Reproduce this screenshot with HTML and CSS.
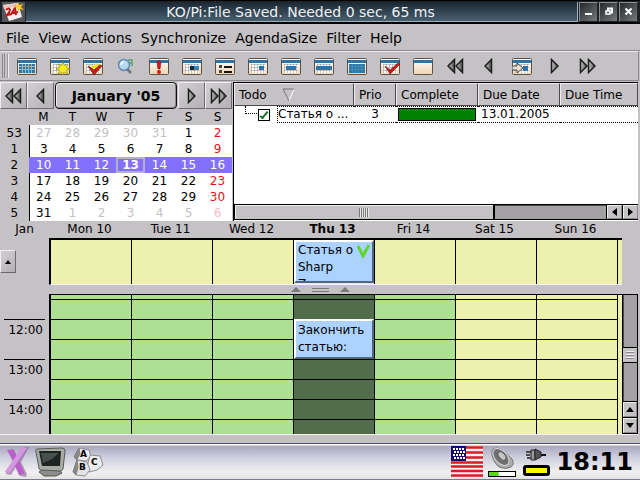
FILE: index.html
```
<!DOCTYPE html>
<html lang="en">
<head>
    <meta charset="UTF-8">
    <meta name="viewport" content="width=device-width, initial-scale=1.0">
    <title>KO/Pi</title>
    <link rel="stylesheet" href="styles.css">
</head>
<body>
    <!-- shared icon shapes -->
    <svg class="sprite" aria-hidden="true">
        <defs>
            <linearGradient id="paper" x1="0" y1="0" x2="0" y2="1">
                <stop offset="0" stop-color="#ffffff"/>
                <stop offset="1" stop-color="#f0d4b0"/>
            </linearGradient>
            <linearGradient id="steel" x1="0" y1="0" x2="1" y2="0">
                <stop offset="0" stop-color="#c8c8c8"/>
                <stop offset="1" stop-color="#505050"/>
            </linearGradient>
            <pattern id="cells" x="3" y="6" width="3" height="3" patternUnits="userSpaceOnUse">
                <path d="M0 0h3M0 0v3" stroke="#8c8a88" stroke-width="1"/>
            </pattern>
            <symbol id="blank" viewBox="0 0 20 17">
                <rect x="0.5" y="0.5" width="19" height="16" rx="1" fill="url(#paper)" stroke="#5c5248"/>
                <rect x="1" y="2" width="18" height="3" fill="#2a74a8"/>
            </symbol>
            <symbol id="cal" viewBox="0 0 20 17">
                <use href="#blank"/>
                <rect x="3" y="6" width="14" height="9" fill="#fff"/>
                <rect x="3" y="6" width="14" height="9" fill="url(#cells)"/>
            </symbol>
            <symbol id="left" viewBox="0 0 9 16">
                <path d="M7.5 1.5v13L1 8z" fill="url(#steel)" stroke="#1c1c1c" stroke-width="1.5"/>
            </symbol>
            <symbol id="right" viewBox="0 0 9 16">
                <path d="M1.5 1.5v13L8 8z" fill="url(#steel)" stroke="#1c1c1c" stroke-width="1.5"/>
            </symbol>
            <symbol id="left2" viewBox="0 0 17 16">
                <use href="#left" x="0" width="9" height="16"/>
                <use href="#left" x="8" width="9" height="16"/>
            </symbol>
            <symbol id="right2" viewBox="0 0 17 16">
                <use href="#right" x="0" width="9" height="16"/>
                <use href="#right" x="8" width="9" height="16"/>
            </symbol>
        </defs>
    </svg>

    <header class="titlebar">
        <svg class="app-icon" width="23" height="20" viewBox="0 0 23 20">
            <rect width="23" height="20" fill="#55585a"/>
            <path d="M1 3l15-2 4 14-13 4z" fill="#f4eeee"/>
            <path d="M1 3l15-2 1 3-15 3z" fill="#e8c8c0"/>
            <path d="M4 8q3-3 4 0q0 2-3 5l5-1M14 13l-1-7-3 5 6-1" fill="none" stroke="#c01818" stroke-width="2"/>
            <path d="M16 0l1 3 4-1-2 3 3 3-4-1-2 3-1-4-3-1 3-2z" fill="#ffc828"/>
        </svg>
        <h1 class="title">KO/Pi:File Saved. Needed 0 sec, 65 ms</h1>
        <button class="win-btn" aria-label="Minimize"><svg width="11" height="11"><path d="M2 7h7v2H2z" fill="#fff"/></svg></button>
        <button class="win-btn" aria-label="Restore"><svg width="11" height="11"><path d="M5 2.500h4v4H5z" fill="none" stroke="#fff" stroke-width="2"/><path d="M3 5h4v3H3z" fill="#555" stroke="#fff" stroke-width="1.500"/></svg></button>
        <button class="win-btn" aria-label="Close"><svg width="11" height="11"><path d="M2.500 2.500l6 6M8.500 2.500l-6 6" stroke="#fff" stroke-width="2"/></svg></button>
    </header>

    <nav class="menubar">
        <button>File</button>
        <button>View</button>
        <button>Actions</button>
        <button>Synchronize</button>
        <button>AgendaSize</button>
        <button>Filter</button>
        <button>Help</button>
    </nav>

    <div class="toolbar">
        <div class="grip"></div>
        <button aria-label="Configure"><svg width="20" height="17"><use href="#blank"/><path d="M2 6h16v9H2z" fill="#2e78a4"/><path d="M2 8.500h16M2 11.500h16M5.500 6v9M8.500 6v9M11.500 6v9M14.500 6v9" stroke="#9cb8b8"/></svg></button>
        <button aria-label="New event"><svg width="20" height="17"><use href="#cal"/><path d="M13 4l1.500 3.500L18 6l-1.500 3.500L20 11l-3.500 1L18 16l-4-2-1 3-1.500-3L8 16l1.500-4L6 11l3.500-1.500L8 6l3.500 1.500z" fill="#f8ec20" stroke="#8c8400" stroke-width=".6"/></svg></button>
        <button aria-label="New todo"><svg width="20" height="17"><use href="#cal"/><path d="M13 4l1 3 4-1-2 4-6 1-3-4 4 1z" fill="#f8e020"/><path d="M5 8l6 4 6-5 2 1-8 9z" fill="#d01c10" stroke="#701008" stroke-width=".7"/></svg></button>
        <button aria-label="Search"><svg width="20" height="17"><circle cx="8" cy="7" r="5.500" fill="#b4d8f0" stroke="#6088b0" stroke-width="1.500"/><path d="M5 7q0-3 3-3" stroke="#fff" stroke-width="1.500" fill="none"/><path d="M11 11l4 4" stroke="#70747c" stroke-width="2.500"/><path d="M12 2h4v6M16 5h-2" stroke="#58a070" stroke-width="1.500" fill="none"/></svg></button>
        <button aria-label="What's next"><svg width="20" height="17"><use href="#blank"/><path d="M8 4q2-3 4 0l-1 7H9z" fill="#d81818" stroke="#801010" stroke-width=".6"/><circle cx="10" cy="14" r="2" fill="#d81818"/></svg></button>
        <button aria-label="Day view"><svg width="20" height="17"><use href="#cal"/><path d="M8 8h4v4H8z" fill="#102838"/><path d="M12 8h5v4h-5z" fill="#3a84b4"/></svg></button>
        <button aria-label="List view"><svg width="20" height="17"><use href="#blank"/><path d="M4 7h3v3H4zM4 12h3v3H4z" fill="#444"/><path d="M9 8h8v2H9zM9 13h8v2H9z" fill="#111"/></svg></button>
        <button aria-label="One day"><svg width="20" height="17"><use href="#cal"/><path d="M11 8h5v4h-5z" fill="#2a74a8"/></svg></button>
        <button aria-label="Work week"><svg width="20" height="17"><use href="#cal"/><path d="M5 8h10v4H5z" fill="#2a74a8"/></svg></button>
        <button aria-label="Week"><svg width="20" height="17"><use href="#cal"/><path d="M2 8h16v4H2z" fill="#2a74a8"/></svg></button>
        <button aria-label="Month"><svg width="20" height="17"><use href="#cal"/><path d="M2 6h16v9H2z" fill="#2a78a8"/><path d="M2 8.500h16M2 11.500h16M5.500 6v9M8.500 6v9M11.500 6v9M14.500 6v9" stroke="#5494b4" stroke-width=".6"/></svg></button>
        <button aria-label="Todo view"><svg width="20" height="17"><use href="#cal"/><path d="M5 8l5 4 8-7 2 1-10 10z" fill="#d01418" stroke="#701010" stroke-width=".6"/></svg></button>
        <button aria-label="Journal"><svg width="20" height="17"><use href="#blank"/></svg></button>
        <button aria-label="Previous month"><svg width="17" height="16"><use href="#left2"/></svg></button>
        <button aria-label="Previous"><svg width="9" height="16"><use href="#left"/></svg></button>
        <button aria-label="Today"><svg width="20" height="17"><use href="#cal"/><path d="M11 8h5v5h-5z" fill="#2a74a8"/><path d="M0 8h5V5l6 5-6 5v-3H0z" fill="#e8e0d8" stroke="#444"/></svg></button>
        <button aria-label="Next"><svg width="9" height="16"><use href="#right"/></svg></button>
        <button aria-label="Next month"><svg width="17" height="16"><use href="#right2"/></svg></button>
    </div>

    <section class="top-pane">
        <div class="datenav">
            <div class="datenav-bar">
                <button class="raised" aria-label="Previous year"><svg width="17" height="16"><use href="#left2"/></svg></button>
                <button class="raised" aria-label="Previous month"><svg width="9" height="16"><use href="#left"/></svg></button>
                <button class="month">January '05</button>
                <button class="raised" aria-label="Next month"><svg width="9" height="16"><use href="#right"/></svg></button>
                <button class="raised" aria-label="Next year"><svg width="17" height="16"><use href="#right2"/></svg></button>
            </div>
            <table class="month-grid">
                <thead>
                    <tr><th></th><th>M</th><th>T</th><th>W</th><th>T</th><th>F</th><th>S</th><th>S</th></tr>
                </thead>
                <tbody>
                    <tr><th>53</th><td class="other">27</td><td class="other">28</td><td class="other">29</td><td class="other">30</td><td class="other">31</td><td>1</td><td class="holiday">2</td></tr>
                    <tr><th>1</th><td>3</td><td>4</td><td>5</td><td>6</td><td>7</td><td>8</td><td class="holiday">9</td></tr>
                    <tr class="selected"><th>2</th><td>10</td><td>11</td><td>12</td><td class="today">13</td><td>14</td><td>15</td><td>16</td></tr>
                    <tr><th>3</th><td>17</td><td>18</td><td>19</td><td>20</td><td>21</td><td>22</td><td class="holiday">23</td></tr>
                    <tr><th>4</th><td>24</td><td>25</td><td>26</td><td>27</td><td>28</td><td>29</td><td class="holiday">30</td></tr>
                    <tr><th>5</th><td>31</td><td class="other">1</td><td class="other">2</td><td class="other">3</td><td class="other">4</td><td class="other">5</td><td class="other holiday">6</td></tr>
                </tbody>
            </table>
        </div>

        <div class="todo">
            <table class="todo-list">
                <colgroup>
                    <col class="col-todo"><col class="col-prio"><col class="col-date"><col class="col-date"><col>
                </colgroup>
                <thead>
                    <tr>
                        <th>Todo <svg class="sort" width="13" height="14"><path d="M12 1L7 13" stroke="#fff"/><path d="M12 1H1l6 12" fill="none" stroke="#777"/></svg></th>
                        <th>Prio</th>
                        <th>Complete</th>
                        <th>Due Date</th>
                        <th>Due Time</th>
                    </tr>
                </thead>
                <tbody>
                    <tr>
                        <td class="todo-cell">
                            <div class="todo-item">
                                <span class="branch"></span>
                                <input type="checkbox" id="todo1" checked>
                                <label for="todo1">Статья о ...</label>
                            </div>
                        </td>
                        <td class="prio">3</td>
                        <td><div class="complete"></div></td>
                        <td>13.01.2005</td>
                        <td></td>
                    </tr>
                </tbody>
            </table>
            <div class="hscroll">
                <div class="hthumb"><span class="ridges"></span></div>
                <div class="htrack"></div>
                <button class="scroll-btn" aria-label="Scroll left"><svg width="5" height="8"><path d="M5 0v8L0 4z"/></svg></button>
                <button class="scroll-btn" aria-label="Scroll right"><svg width="5" height="8"><path d="M0 0v8l5-4z"/></svg></button>
            </div>
        </div>
    </section>

    <div class="day-names">
        <span class="month-name">Jan</span>
        <span>Mon 10</span>
        <span>Tue 11</span>
        <span>Wed 12</span>
        <span class="current">Thu 13</span>
        <span>Fri 14</span>
        <span>Sat 15</span>
        <span>Sun 16</span>
    </div>

    <section class="allday">
        <div class="gutter">
            <button class="raised expand" aria-label="Expand"><svg width="6" height="4"><path d="M3 0l3 4H0z"/></svg></button>
        </div>
        <div class="days">
            <div class="day"></div>
            <div class="day"></div>
            <div class="day"></div>
            <div class="day">
                <div class="event">
                    <svg class="tick" width="13" height="15"><path d="M1 3l5 10 6-11" fill="none" stroke="#5fd62c" stroke-width="3"/></svg>
                    Статья о Sharp Zaurus
                </div>
            </div>
            <div class="day"></div>
            <div class="day"></div>
            <div class="day"></div>
        </div>
    </section>

    <div class="splitter">
        <svg width="10" height="5"><path d="M5 0l5 5H0z"/></svg>
        <span class="handle"></span>
        <svg width="10" height="5"><path d="M5 0l5 5H0z"/></svg>
    </div>

    <section class="agenda">
        <div class="hours">
            <span>12:00</span>
            <span>13:00</span>
            <span>14:00</span>
        </div>
        <div class="days">
            <div class="day work"></div>
            <div class="day work"></div>
            <div class="day work"></div>
            <div class="day now">
                <div class="event">Закончить статью:</div>
            </div>
            <div class="day work"></div>
            <div class="day"></div>
            <div class="day"></div>
        </div>
        <div class="vscroll">
            <div class="vtrack before"></div>
            <div class="vthumb"></div>
            <div class="vtrack after"></div>
            <button class="scroll-btn" aria-label="Scroll up"><svg width="8" height="5"><path d="M4 0l4 5H0z"/></svg></button>
            <button class="scroll-btn" aria-label="Scroll down"><svg width="8" height="5"><path d="M0 0h8L4 5z"/></svg></button>
        </div>
    </section>

    <footer class="taskbar">
        <button class="task" aria-label="Start">
            <svg width="26" height="32" viewBox="0 0 26 32">
                <path d="M4 5l6-1 4 8 5-10 6-1-8 15 6 12-1 3-6-1-4-9-5 8-5-1 1-4 6-9z" fill="#70487c" opacity=".5"/>
                <path d="M3 4l6-1 4 8 5-10 5 1-8 13 6 13-6 1-4-9-5 7-5-1 8-11z" fill="#b860c8"/>
                <path d="M18 1l5 1-17 25-5-1z" fill="#d498e0"/>
            </svg>
        </button>
        <button class="task" aria-label="Desktop">
            <svg width="32" height="30" viewBox="0 0 32 30">
                <path d="M4 25l6-4 14 1 3 4-6 3H9z" fill="#8c8c88" stroke="#555"/>
                <path d="M2 2l25-1q3 0 3 3l-2 18q-1 2-3 2L6 23q-2 0-2-2L1 5q-1-3 1-3z" fill="#a8aaa4" stroke="#585a56"/>
                <path d="M4 4h22l-1 15H7z" fill="#1d2422"/>
                <path d="M6 6h18l-7 6-9 4z" fill="#46504c"/>
            </svg>
        </button>
        <button class="task" aria-label="Input method">
            <svg width="32" height="30" viewBox="0 0 32 30">
                <g stroke="#77777a" stroke-width=".8">
                    <path d="M2 10l5-9 10 2 2 7-5 4-9-1z" fill="#f0f0f0"/>
                    <path d="M15 20l3-12 10 1 3 9-6 5-8 2z" fill="#ececec"/>
                    <path d="M1 25l4-12 10 2 3 8-5 6-9-1z" fill="#e4e4e4"/>
                    <path d="M2 10l5-9 1 6-3 6zM1 25l4-12 1 7-2 8z" fill="#8a8a8a"/>
                </g>
                <g class="block-letters"><text x="8" y="10">A</text><text x="7" y="23">B</text><text x="19" y="18">C</text></g>
            </svg>
        </button>
        <div class="spacer"></div>
        <button class="task" aria-label="Keyboard layout: US">
            <svg width="32" height="31" viewBox="0 0 32 31">
                <rect width="32" height="31" fill="#f4f0f0"/>
                <path d="M0 1.500h32M0 6.500h32M0 11.500h32M0 16.500h32M0 20.500h32M0 25h32M0 29.500h32" stroke="#d81c28" stroke-width="2.500"/>
                <rect width="15" height="15" fill="#10106c"/>
                <path d="M2 3h12M3 6h12M2 9h12M3 12h12" stroke="#fff" stroke-width="2" stroke-dasharray="2 1"/>
            </svg>
        </button>
        <button class="task volume" aria-label="Volume">
            <svg width="26" height="22" viewBox="0 0 26 22">
                <path d="M3 3q4-4 10 0l10 9q3 5-1 8-5 3-12 0-8-7-7-17z" fill="#aaa" stroke="#777"/>
                <ellipse cx="12" cy="10" rx="10" ry="6" transform="rotate(48 12 10)" fill="#707070" stroke="#d8d8d8"/>
                <ellipse cx="13" cy="9" rx="5" ry="3" transform="rotate(48 13 9)" fill="#c4c4c4" stroke="#555"/>
            </svg>
            <span class="level"></span>
        </button>
        <button class="task power" aria-label="Power">
            <svg width="20" height="14" viewBox="0 0 20 14">
                <path d="M0 4h7M0 7h4M1 10h6" stroke="#222" stroke-width="1.500"/>
                <path d="M5 2h4v10H5z" fill="#999" stroke="#222"/>
                <path d="M9 1l6 3v5l-6 3z" fill="#555" stroke="#222"/>
                <path d="M15 7h5" stroke="#111" stroke-width="2"/>
            </svg>
            <span class="battery"></span>
        </button>
        <time class="clock">18:11</time>
    </footer>
</body>
</html>
```
FILE: styles.css
```
* {
    margin: 0;
    padding: 0;
    box-sizing: border-box;
}

body {
    display: flex;
    flex-direction: column;
    min-height: 100vh;
    background: #c5c2c5;
    color: #000;
    font-family: "DejaVu Sans", "Noto Sans", sans-serif;
    font-size: 12px;
    line-height: 16px;
}

button {
    display: flex;
    align-items: center;
    justify-content: center;
    border: none;
    background: none;
    color: inherit;
    font: inherit;
}

svg {
    display: block;
    flex: none;
}

.sprite {
    position: absolute;
    width: 0;
    height: 0;
}

/* title bar */
.titlebar {
    display: flex;
    align-items: center;
    gap: 1px;
    height: 24px;
    padding: 0 2px;
    border-top: 1px solid #000;
    border-bottom: 2px solid #000;
    background: #1c2228;
}

.title {
    flex: 1;
    height: 20px;
    padding-right: 2px;
    border-right: 1px solid #a0b0bc;
    border-bottom: 1px solid #a0b0bc;
    background: linear-gradient(#1b2833, #48606f);
    color: #eef2f6;
    font-size: 14px;
    font-weight: normal;
    line-height: 21px;
    text-align: center;
}

.win-btn {
    width: 19px;
    height: 20px;
    border: 1px solid;
    border-color: #8a8e90 #222 #222 #8a8e90;
    background: linear-gradient(135deg, #26292c, #74787a);
}

/* menus and toolbar */
.menubar {
    display: flex;
    gap: 1px;
    height: 27px;
    padding: 2px 2px 0;
    border-bottom: 1px solid #8c898c;
    font-size: 14px;
}

.menubar button {
    padding: 0 4px;
}

.toolbar {
    display: flex;
    height: 30px;
    margin-right: 1px;
    padding-left: 2px;
    border-top: 1px solid #eeecee;
    border-right: 1px solid #8c898c;
    border-bottom: 1px solid #8c898c;
}

.toolbar button {
    width: 33px;
}

.grip {
    width: 7px;
    margin: 2px 1px 2px 0;
    border-left: 3px double #8c898c;
    border-right: 2px groove #eee;
}

/* date navigator */
.top-pane {
    display: flex;
    height: 140px;
    padding-top: 1px;
}

.datenav {
    width: 233px;
    padding-right: 1px;
}

.datenav-bar {
    display: flex;
    height: 27px;
}

.raised {
    width: 27px;
    border: 1px solid;
    border-color: #f0eef0 #6c696c #6c696c #f0eef0;
    background: linear-gradient(135deg, #d2cfd2, #b4b1b4);
}

.month {
    flex: 1;
    margin: 0 1px;
    border: 1px solid #111;
    border-radius: 4px;
    background: #c5c2c5;
    box-shadow: inset 1px 1px #eee, inset -1px -1px #8c898c;
    font-size: 14px;
    font-weight: bold;
}

.month-grid {
    width: 100%;
    table-layout: fixed;
    border-collapse: collapse;
    text-align: center;
}

.month-grid th {
    font-weight: normal;
}

.month-grid td {
    background: #fff;
}

.month-grid tbody th + td {
    border-left: 1px solid #000;
}

.month-grid .other {
    color: #c4c2c4;
}

.month-grid .holiday {
    color: #dc1420;
}

.month-grid .other.holiday {
    color: #f4bcc8;
}

.month-grid .selected td {
    border-color: #8470ff;
    background: #8470ff;
    color: #fff;
}

.month-grid .selected .today {
    box-shadow: inset 0 0 0 2px #b4b0c8;
    font-weight: bold;
}

/* todo list */
.todo {
    display: flex;
    flex: 1;
    flex-direction: column;
    min-width: 0;
    margin-right: 2px;
    padding-bottom: 1px;
    border-top: 1px solid #000;
    border-left: 1px solid #000;
    background: #fff;
}

.todo-list {
    width: 100%;
    table-layout: fixed;
    border-collapse: separate;
    border-spacing: 0;
}

.col-todo {
    width: 120px;
}

.col-prio {
    width: 42px;
}

.col-date {
    width: 82px;
}

.todo-list th {
    height: 23px;
    padding-left: 4px;
    border: 1px solid;
    border-color: #eeecee #4c494c #4c494c #eeecee;
    background: #c5c2c5;
    font-weight: normal;
    text-align: left;
    white-space: nowrap;
}

.sort {
    display: inline-block;
    margin-left: 12px;
    vertical-align: middle;
}

.todo-list td {
    height: 17px;
    padding-left: 3px;
    border-top: 1px dotted #000;
    border-bottom: 1px dotted #000;
    line-height: 15px;
}

.todo-list .todo-cell {
    padding: 0;
    border: none;
}

.todo-list .prio {
    padding: 0;
    text-align: center;
}

.todo-item {
    display: flex;
    align-items: center;
}

.todo-item label {
    flex: 1;
    height: 17px;
    border: 1px dotted #000;
    border-right: none;
    white-space: nowrap;
}

.branch {
    width: 12px;
    height: 8px;
    margin-left: 11px;
    align-self: flex-start;
    border-left: 1px dotted #000;
    border-bottom: 1px dotted #000;
}

.todo-item input {
    display: flex;
    width: 12px;
    height: 12px;
    margin: 0 7px 0 1px;
    appearance: none;
    border: 1px solid #000;
    background: #fff;
}

.todo-item input:checked::before {
    content: "";
    width: 4px;
    height: 7px;
    margin: 0 3px;
    border: solid #1a7028;
    border-width: 0 2px 2px 0;
    transform: rotate(40deg);
}

.complete {
    height: 13px;
    margin-right: 2px;
    margin-left: -1px;
    border: 1px solid #000;
    background: #008200;
}

.hscroll {
    display: flex;
    height: 16px;
    margin-top: auto;
    border: 1px solid #000;
    border-right: none;
    background: #000;
}

.hthumb {
    display: flex;
    flex: 258;
    align-items: center;
    justify-content: center;
    margin-right: 2px;
    border-top: 1px solid #eee;
    border-left: 1px solid #eee;
    background: #c5c2c5;
}

.ridges {
    width: 10px;
    height: 9px;
    background: repeating-linear-gradient(90deg, #777 0 1px, #e8e8e8 1px 2px);
}

.htrack {
    flex: 112;
    border-top: 1px solid #4c494c;
    background: #a4a1a4;
}

.scroll-btn {
    width: 15px;
    height: 14px;
    margin-left: 1px;
    border: 1px solid;
    border-color: #eee #8c898c #8c898c #eee;
    background: #c5c2c5;
}

/* week agenda */
.day-names {
    display: grid;
    grid-template-columns: 49px repeat(7, 1fr);
    height: 17px;
    padding-right: 24px;
    line-height: 17px;
    text-align: center;
}

.current {
    font-weight: bold;
}

.allday {
    display: flex;
    height: 47px;
    padding-right: 18px;
}

.gutter {
    width: 49px;
    padding-top: 12px;
}

.expand {
    width: 16px;
    height: 23px;
}

.days {
    display: grid;
    flex: 1;
    grid-template-columns: repeat(7, 1fr);
    padding-right: 4px;
    border-top: 2px solid #000;
    border-left: 2px solid #000;
    background: #eef0ad;
}

.allday .days {
    border-bottom: 1px solid #f4f2f4;
}

.day {
    min-width: 0;
    border-right: 1px solid #000;
    overflow: hidden;
}

.event {
    height: 43px;
    padding: 0 2px;
    border: 2px solid;
    border-color: #fff #4c6a7c #4c6a7c #fff;
    background: #acd2ff;
    line-height: 17px;
    overflow: hidden;
}

.tick {
    float: right;
    margin-top: 1px;
}

.splitter {
    display: flex;
    align-items: center;
    justify-content: center;
    gap: 11px;
    height: 9px;
    fill: #7c797c;
}

.handle {
    width: 17px;
    height: 4px;
    border-top: 1px solid #7c797c;
    border-bottom: 1px solid #7c797c;
}

.agenda {
    display: flex;
    flex: 1;
    min-height: 141px;
    margin-right: 2px;
    border-bottom: 1px solid #f4f2f4;
}

.agenda .days {
    border-top-width: 1px;
}

/* one line every half hour */
.agenda .day {
    background: repeating-linear-gradient(#000 0 1px, transparent 1px 20px) 0 -16px / 100% 200vh;
}

.agenda .work {
    background-color: #addf94;
}

.agenda .now {
    padding-top: 24px;
    background-color: #526d4a;
}

.agenda .event {
    height: 40px;
    padding-top: 1px;
}

.hours {
    display: flex;
    flex-direction: column;
    width: 49px;
    padding: 25px 4px 0;
}

.hours span {
    height: 40px;
    padding: 2px 2px 0 0;
    border-top: 1px solid #000;
    text-align: right;
}

.hours span:last-child {
    height: 20px;
}

.vscroll {
    display: flex;
    flex-direction: column;
    gap: 1px;
    width: 16px;
    border: 1px solid #000;
    background: #000;
}

.vscroll .scroll-btn {
    width: 14px;
    height: 15px;
    margin-left: 0;
}

.vtrack {
    background: #a4a1a4;
    border-left: 1px solid #4c494c;
}

.before {
    flex: 52;
}

.after {
    flex: 38;
}

.vthumb {
    height: 14px;
    border: 3px solid #c5c2c5;
    background: repeating-linear-gradient(#eee 0 1px, #8c898c 1px 2px, #c5c2c5 2px 3px);
}

/* taskbar */
.taskbar {
    display: flex;
    align-items: center;
    gap: 5px;
    height: 37px;
    margin-top: 8px;
    padding: 0 7px 0 4px;
    border-top: 1px solid #4c4a78;
    border-bottom: 1px solid #777c8c;
    background: linear-gradient(#fff 0 1px, #a9a8bf 2px, #d0d0de 14px, #f0f0f0 28px, #e4e4e6);
}

.task {
    flex-direction: column;
}

.block-letters {
    font-size: 9px;
    font-weight: bold;
}

.spacer {
    flex: 1;
}

.volume {
    gap: 2px;
}

.level {
    width: 28px;
    height: 6px;
    border: 1px solid #000;
    background: linear-gradient(90deg, #58dc10 35%, #fff 40%);
}

.power {
    gap: 3px;
    padding: 0 2px;
}

.battery {
    width: 27px;
    height: 11px;
    border: 3px solid #000;
    border-radius: 3px;
    background: #fff800;
}

.clock {
    font-size: 24px;
    font-weight: bold;
    line-height: 32px;
}
```
